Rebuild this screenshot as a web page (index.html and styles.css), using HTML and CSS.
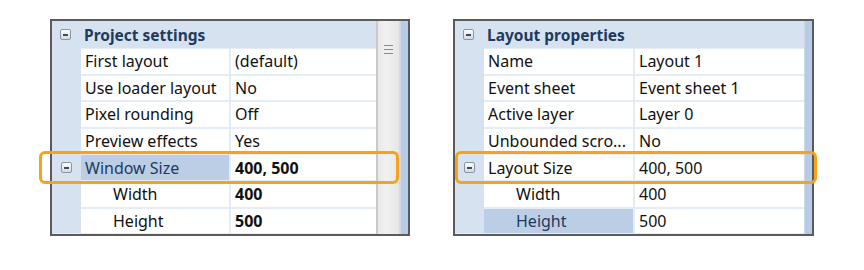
FILE: index.html
```html
<!DOCTYPE html>
<html>
<head>
<meta charset="utf-8">
<link rel="stylesheet" href="styles.css">
</head>
<body>
<div class="page">
  <div class="panel left">
    <div class="grid">
      <div class="head"><span class="tog"></span><span class="title">Project settings</span></div>
      <div class="rows">
        <div class="row"><span class="gut"></span><span class="name">First layout</span><span class="val">(default)</span></div>
        <div class="row"><span class="gut"></span><span class="name">Use loader layout</span><span class="val">No</span></div>
        <div class="row"><span class="gut"></span><span class="name">Pixel rounding</span><span class="val">Off</span></div>
        <div class="row"><span class="gut"></span><span class="name">Preview effects</span><span class="val">Yes</span></div>
        <div class="row hl"><span class="gut"><span class="tog"></span></span><span class="name sel">Window Size</span><span class="val bold">400, 500</span></div>
        <div class="row"><span class="gut"></span><span class="name sub">Width</span><span class="val bold">400</span></div>
        <div class="row"><span class="gut"></span><span class="name sub">Height</span><span class="val bold">500</span></div>
      </div>
    </div>
    <div class="scroll"><span class="grip"></span></div>
    <div class="edge"></div>
  </div>
  <div class="panel right">
    <div class="grid">
      <div class="head"><span class="tog"></span><span class="title">Layout properties</span></div>
      <div class="rows">
        <div class="row"><span class="gut"></span><span class="name">Name</span><span class="val">Layout 1</span></div>
        <div class="row"><span class="gut"></span><span class="name">Event sheet</span><span class="val">Event sheet 1</span></div>
        <div class="row"><span class="gut"></span><span class="name">Active layer</span><span class="val">Layer 0</span></div>
        <div class="row"><span class="gut"></span><span class="name">Unbounded scro...</span><span class="val">No</span></div>
        <div class="row hl"><span class="gut"><span class="tog"></span></span><span class="name">Layout Size</span><span class="val">400, 500</span></div>
        <div class="row"><span class="gut"></span><span class="name sub">Width</span><span class="val">400</span></div>
        <div class="row"><span class="gut"></span><span class="name sub sel">Height</span><span class="val">500</span></div>
      </div>
    </div>
    <div class="edge"></div>
  </div>
</div>
</body>
</html>
```
FILE: styles.css
```css
html, body { margin: 0; padding: 0; background: #fff; }
body { font-family: "Noto Sans", "Open Sans", sans-serif; font-size: 16px; color: #111; }
.page { display: flex; gap: 43px; padding: 19px 0 0 50px; }
.panel { display: flex; height: 213px; border: 2px solid #5b5b5b; background: #d6e2f0; }
.left { width: 356px; }
.right { width: 357px; }
.grid { flex: 1; display: flex; flex-direction: column; min-width: 0; }
.head { height: 27px; display: flex; align-items: center; background: #d6e2f0; }
.head .tog { margin: 0 0 0 8px; }
.title { margin-left: 13px; font-weight: bold; color: #1f3a5d; font-size: 15.5px; }
.rows { flex: 1; display: flex; flex-direction: column; gap: 2px; padding-top: 1px; background: #e4ecf6; }
.row { position: relative; height: 24.6px; display: grid; grid-template-columns: 27px 148px 1fr; column-gap: 2px; }
.right .row { grid-template-columns: 27px 149px 1fr; }
.gut { background: #d6e2f0; margin-right: -2px; display: flex; align-items: center; justify-content: center; margin-top: -2px; padding-top: 2px; }
.row:first-child .gut { margin-top: -1px; padding-top: 1px; }
.name, .val { background: #fff; display: flex; align-items: center; padding-left: 4px; white-space: nowrap; overflow: hidden; }
.val { padding-left: 4px; }
.sub { padding-left: 32px; }
.sel { background: #bccee5; color: #1e3a5c; }
.bold { font-weight: bold; }
.tog { width: 9px; height: 9px; border: 1px solid #8a96a3; border-radius: 2px; background: linear-gradient(#fdfdfd, #d5d9df); position: relative; display: inline-block; flex: none; }
.tog::after { content: ""; position: absolute; left: 2px; top: 4px; width: 5px; height: 1.5px; background: #3c4c60; }
.row.hl::after { content: ""; position: absolute; z-index: 3; top: -4px; bottom: -4px; border: 3px solid #f7a21c; border-radius: 6px; pointer-events: none; }
.left .row.hl::after { left: -13px; width: 354px; }
.right .row.hl::after { left: 0; width: 352px; width: 352px; }
.right .row.hl::after { width: 356px; }
.scroll { width: 21px; background: linear-gradient(90deg, #e9e9e9, #f1f1f1 40%, #e6e6e6); border-left: 2px solid #c9c9c9; border-right: 1px solid #d9d9d9; position: relative; }
.grip { position: absolute; left: 6px; top: 24px; width: 9px; height: 7px; border-top: 1px solid #8c8c8c; border-bottom: 1px solid #8c8c8c; }
.grip::after { content: ""; position: absolute; left: 0; right: 0; top: 3px; height: 1px; background: #8c8c8c; }
.edge { width: 7px; background: #b7cbe6; border-left: 1px solid #cfd9e6; }
```
